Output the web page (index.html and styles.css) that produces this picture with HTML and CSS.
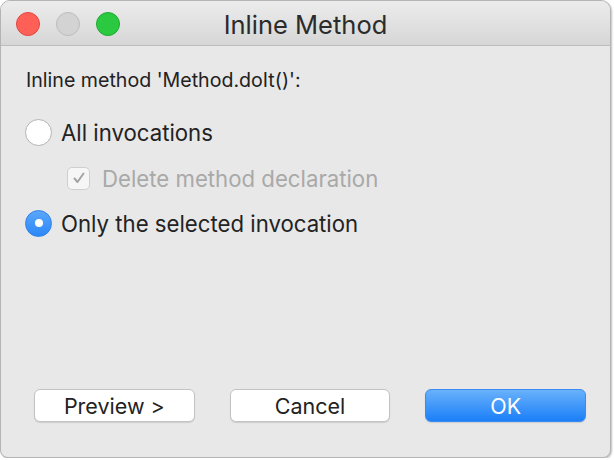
FILE: index.html
```html
<!DOCTYPE html>
<html>
<head>
<meta charset="utf-8">
<link rel="stylesheet" href="styles.css">
</head>
<body>
<div class="window">
  <div class="titlebar">
    <div class="lights">
      <span class="light red"></span>
      <span class="light gray"></span>
      <span class="light green"></span>
    </div>
    <div class="title">Inline Method</div>
  </div>
  <div class="content">
    <div class="heading">Inline method 'Method.doIt()':</div>
    <div class="row radio-row first">
      <span class="radio"></span>
      <span class="label">All invocations</span>
    </div>
    <div class="row check-row">
      <span class="check">
        <svg width="16" height="16" viewBox="0 0 16 16"><path d="M3.5 8.5 L6.5 12 L12.5 3.5" fill="none" stroke="#a4a4a4" stroke-width="2" stroke-linecap="round" stroke-linejoin="round"/></svg>
      </span>
      <span class="label disabled">Delete method declaration</span>
    </div>
    <div class="row radio-row second">
      <span class="radio selected"><span class="dot"></span></span>
      <span class="label">Only the selected invocation</span>
    </div>
    <div class="spacer"></div>
    <div class="buttons">
      <button class="btn">Preview &gt;</button>
      <button class="btn">Cancel</button>
      <button class="btn primary">OK</button>
    </div>
  </div>
</div>
</body>
</html>
```

FILE: styles.css
```css
html, body {
  margin: 0;
  padding: 0;
  background: #ffffff;
}
body {
  font-family: Inter, "Liberation Sans", sans-serif;
  color: #222;
}
.window {
  width: 609px;
  height: 456px;
  border: 1px solid #b4b4b4;
  border-radius: 10px 10px 8px 8px;
  overflow: hidden;
  display: flex;
  flex-direction: column;
  background: #e8e8e8;
  box-shadow: 1px 1px 2px rgba(0,0,0,0.25);
}
.titlebar {
  height: 44px;
  flex: none;
  position: relative;
  background: linear-gradient(#ececec, #d6d6d6);
  border-bottom: 1px solid #bdbdbd;
  display: flex;
  align-items: center;
  justify-content: center;
}
.lights {
  position: absolute;
  left: 15px;
  top: 11px;
  display: flex;
  gap: 16px;
}
.light {
  width: 24px;
  height: 24px;
  border-radius: 50%;
  box-sizing: border-box;
}
.red { background: #fe5f57; border: 1px solid #e2463f; }
.gray { background: #d3d3d3; border: 1px solid #bcbcbc; }
.green { background: #2ac940; border: 1px solid #1faa31; }
.title {
  font-size: 25.5px;
  color: #2b2b2b;
  margin-top: 2px;
}
.content {
  flex: 1;
  display: flex;
  flex-direction: column;
  padding: 0 24px 0 24px;
}
.heading {
  font-size: 19.6px;
  margin-top: 21px;
  line-height: 26px;
  padding-left: 1px;
}
.row {
  display: flex;
  align-items: center;
  font-size: 22.2px;
}
.radio-row {
  height: 30px;
}
.radio-row.first { margin-top: 24px; }
.check-row {
  margin-top: 18px;
  padding-left: 42px;
  height: 26px;
  font-size: 22.2px;
}
.radio-row.second { margin-top: 17px; }
.radio {
  width: 27px;
  height: 27px;
  border-radius: 50%;
  box-sizing: border-box;
  border: 1px solid #b4b4b4;
  background: #fff;
  margin-right: 9px;
  display: flex;
  align-items: center;
  justify-content: center;
}
.radio.selected {
  background: linear-gradient(#5aa7fb, #2d87f7);
  border: 1px solid #2b80ea;
}
.dot {
  width: 8px;
  height: 8px;
  border-radius: 50%;
  background: #fff;
}
.check {
  width: 23px;
  height: 23px;
  box-sizing: border-box;
  border: 1px solid #cfcfcf;
  border-radius: 5px;
  background: #f6f6f6;
  margin-right: 12px;
  display: flex;
  align-items: center;
  justify-content: center;
}
.label.disabled {
  color: #a9a9a9;
}
.spacer { flex: 1; }
.buttons {
  display: flex;
  gap: 35px;
  padding-left: 9px;
  margin-bottom: 35px;
}
.btn {
  width: 161px;
  height: 33px;
  font-family: Inter, "Liberation Sans", sans-serif;
  font-size: 21.5px;
  color: #222;
  background: #fff;
  border: 1px solid #c3c3c3;
  border-radius: 6px;
  box-shadow: 0 1px 1px rgba(0,0,0,0.12);
  padding: 0;
}
.btn.primary {
  background: linear-gradient(#69b1fb, #1b7ff8);
  border: 1px solid #3a8cf3;
  color: #fff;
}
```
